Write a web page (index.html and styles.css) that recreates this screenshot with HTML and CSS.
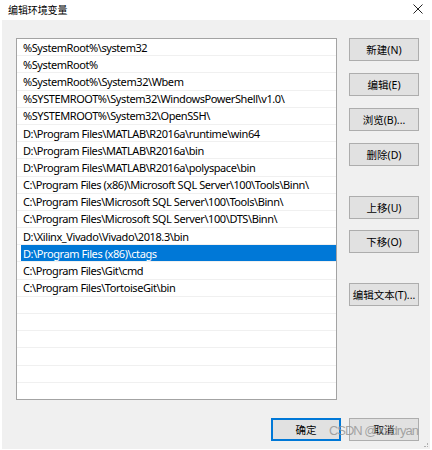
FILE: index.html
```html
<!DOCTYPE html>
<html lang="zh-CN">
<head>
<meta charset="utf-8">
<title>编辑环境变量</title>
<link rel="stylesheet" href="styles.css">
</head>
<body>
<div class="window">
  <div class="titlebar">
    <span class="title">编辑环境变量</span>
    <svg class="close" width="10" height="10" viewBox="0 0 10 10"><path d="M0.5 0.5 L9.5 9.5 M9.5 0.5 L0.5 9.5" stroke="#222" stroke-width="1"/></svg>
  </div>
  <div class="panel">
    <div class="main">
      <div class="list">
        <div class="row"><span class="cell">%SystemRoot%\system32</span></div>
        <div class="row"><span class="cell">%SystemRoot%</span></div>
        <div class="row"><span class="cell">%SystemRoot%\System32\Wbem</span></div>
        <div class="row"><span class="cell">%SYSTEMROOT%\System32\WindowsPowerShell\v1.0\</span></div>
        <div class="row"><span class="cell">%SYSTEMROOT%\System32\OpenSSH\</span></div>
        <div class="row"><span class="cell">D:\Program Files\MATLAB\R2016a\runtime\win64</span></div>
        <div class="row"><span class="cell">D:\Program Files\MATLAB\R2016a\bin</span></div>
        <div class="row"><span class="cell">D:\Program Files\MATLAB\R2016a\polyspace\bin</span></div>
        <div class="row"><span class="cell">C:\Program Files (x86)\Microsoft SQL Server\100\Tools\Binn\</span></div>
        <div class="row"><span class="cell">C:\Program Files\Microsoft SQL Server\100\Tools\Binn\</span></div>
        <div class="row"><span class="cell">C:\Program Files\Microsoft SQL Server\100\DTS\Binn\</span></div>
        <div class="row"><span class="cell">D:\Xilinx_Vivado\Vivado\2018.3\bin</span></div>
        <div class="row selected"><span class="cell">D:\Program Files (x86)\ctags</span></div>
        <div class="row"><span class="cell">C:\Program Files\Git\cmd</span></div>
        <div class="row"><span class="cell">C:\Program Files\TortoiseGit\bin</span></div>
        <div class="row"><span class="cell"></span></div>
        <div class="row"><span class="cell"></span></div>
        <div class="row"><span class="cell"></span></div>
        <div class="row"><span class="cell"></span></div>
        <div class="row"><span class="cell"></span></div>
        <div class="row"><span class="cell"></span></div>
        <div class="row"><span class="cell"></span></div>
      </div>
      <div class="side">
        <button class="btn">新建(N)</button>
        <button class="btn gap-s">编辑(E)</button>
        <button class="btn gap-s">浏览(B)...</button>
        <button class="btn gap-s">删除(D)</button>
        <button class="btn gap-l">上移(U)</button>
        <button class="btn gap-t">下移(O)</button>
        <button class="btn gap-l">编辑文本(T)...</button>
      </div>
    </div>
    <div class="footer">
      <button class="btn default">确定</button>
      <button class="btn">取消</button>
      <span class="watermark">CSDN @Xudryan</span>
    </div>
    <span class="grip"></span>
  </div>
</div>
</body>
</html>
```

FILE: styles.css
```css
* { box-sizing: border-box; }
html, body {
  margin: 0;
  padding: 0;
  background: #ffffff;
}
body {
  width: 432px;
  height: 450px;
  overflow: hidden;
  font-family: "Noto Sans", "Noto Sans CJK SC", sans-serif;
  font-size: 11px;
  color: #000;
}
.window {
  display: flex;
  flex-direction: column;
  height: 450px;
}
.titlebar {
  height: 20px;
  display: flex;
  align-items: center;
  justify-content: space-between;
  padding: 0 8px 2px 8px;
}
.title {
  font-family: "Noto Sans CJK SC", sans-serif;
  font-size: 10px;
  color: #000;
  letter-spacing: -0.1px;
}
.close {
  margin-right: 1px;
}
.panel {
  position: relative;
  margin: 0 2px 1px 2px;
  flex: 1;
  background: #f0f0f0;
  padding: 18px 11px 0 14px;
  display: flex;
  flex-direction: column;
}
.main {
  display: flex;
  gap: 12px;
}
.list {
  width: 321px;
  height: 362px;
  background: #fff;
  border: 1px solid #a3a3a3;
  overflow: hidden;
  display: flex;
  flex-direction: column;
}
.row {
  flex: 0 0 17.2px;
  height: 17.2px;
  border-bottom: 1px solid #f0f0f0;
  display: flex;
}
.cell {
  flex: 1;
  display: flex;
  align-items: center;
  padding-left: 2px;
  margin-left: 4px;
  white-space: nowrap;
  font-size: 11px;
  letter-spacing: -0.42px;
  line-height: 1;
}
.row.selected .cell {
  background: #0078d7;
  color: #fff;
}
.side {
  display: flex;
  flex-direction: column;
}
.btn {
  width: 70px;
  height: 23px;
  background: #e1e1e1;
  border: 1px solid #adadad;
  padding: 0;
  margin: 0;
  font-family: "Noto Sans", "Noto Sans CJK SC", sans-serif;
  font-size: 10.5px;
  color: #000;
  display: flex;
  align-items: center;
  justify-content: center;
}
.gap-s { margin-top: 12px; }
.gap-l { margin-top: 30px; }
.gap-t { margin-top: 11px; }
.footer {
  position: relative;
  margin-top: 18px;
  display: flex;
  justify-content: flex-end;
  gap: 8px;
}
.btn.default {
  border: 2px solid #0078d7;
}
.watermark {
  position: absolute;
  right: 1px;
  top: 5px;
  font-family: "Liberation Sans", sans-serif;
  font-size: 13px;
  letter-spacing: -1px;
  color: rgba(150, 150, 150, 0.85);
  pointer-events: none;
}
.grip {
  position: absolute;
  right: 2px;
  bottom: 2px;
  width: 4px;
  height: 4px;
  border-right: 1px dotted #b0b0b0;
  border-bottom: 1px dotted #b0b0b0;
}
```
